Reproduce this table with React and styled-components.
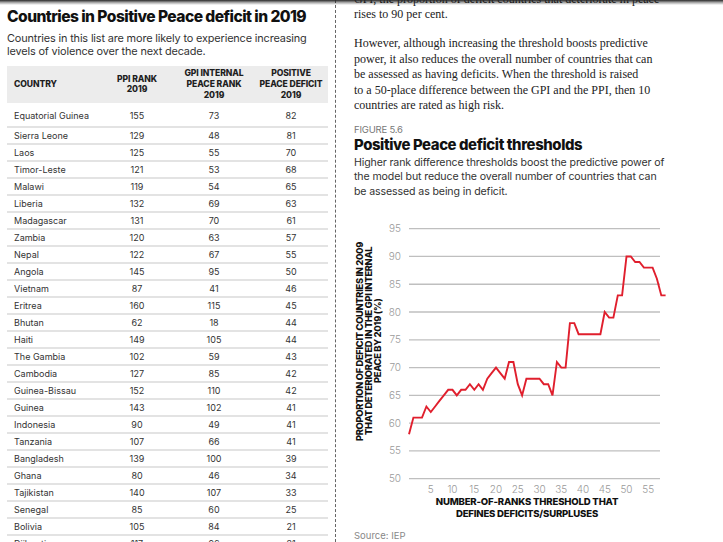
import React from 'react';
import styled, { createGlobalStyle } from 'styled-components';

const GlobalStyle = createGlobalStyle`
  html, body {
    margin: 0;
    padding: 0;
    background: #fff;
  }
  body {
    font-family: Inter, "Liberation Sans", sans-serif;
    color: #222;
    overflow: hidden;
  }
`;

const rows = [
  ['Equatorial Guinea', 155, 73, 82],
  ['Sierra Leone', 129, 48, 81],
  ['Laos', 125, 55, 70],
  ['Timor-Leste', 121, 53, 68],
  ['Malawi', 119, 54, 65],
  ['Liberia', 132, 69, 63],
  ['Madagascar', 131, 70, 61],
  ['Zambia', 120, 63, 57],
  ['Nepal', 122, 67, 55],
  ['Angola', 145, 95, 50],
  ['Vietnam', 87, 41, 46],
  ['Eritrea', 160, 115, 45],
  ['Bhutan', 62, 18, 44],
  ['Haiti', 149, 105, 44],
  ['The Gambia', 102, 59, 43],
  ['Cambodia', 127, 85, 42],
  ['Guinea-Bissau', 152, 110, 42],
  ['Guinea', 143, 102, 41],
  ['Indonesia', 90, 49, 41],
  ['Tanzania', 107, 66, 41],
  ['Bangladesh', 139, 100, 39],
  ['Ghana', 80, 46, 34],
  ['Tajikistan', 140, 107, 33],
  ['Senegal', 85, 60, 25],
  ['Bolivia', 105, 84, 21],
  ['Djibouti', 117, 96, 21],
];

// threshold -> % of deficit countries that deteriorated
const series = [
  58, 61, 61, 61, 63, 62, 63, 64, 65, 66, 66, 65, 66, 66, 67, 66, 67, 66, 68, 69,
  70, 69, 68, 71, 71, 67, 65, 68, 68, 68, 68, 67, 67, 65, 71, 70, 70, 78, 78, 76,
  76, 76, 76, 76, 76, 80, 79, 79, 83, 83, 90, 90, 89, 89, 88, 88, 88, 86, 83, 83,
];

const TopShade = styled.div`
  position: fixed;
  top: 0;
  left: 0;
  right: 0;
  height: 5px;
  background: linear-gradient(#2a2a2a, rgba(0, 0, 0, 0.35) 50%, rgba(0, 0, 0, 0));
  z-index: 5;
`;

const Page = styled.div`
  display: grid;
  grid-template-columns: 336px 1fr;
  height: 542px;
  overflow: hidden;
`;

const LeftColumn = styled.section`
  border-right: 1px dashed #666;
  padding: 0 8px 0 7px;
  overflow: hidden;
`;

const Kicker = styled.div`
  margin-top: -8px;
  font-size: 9px;
  line-height: 10px;
  color: #888;
  letter-spacing: 0.5px;
`;

const TableTitle = styled.h2`
  margin: 5px 0 0;
  font-size: 15.6px;
  line-height: 20px;
  font-weight: 800;
  letter-spacing: -0.55px;
  color: #111;
`;

const TableIntro = styled.p`
  margin: 5px 0 0;
  font-size: 10.9px;
  line-height: 13.4px;
  color: #333;
  letter-spacing: -0.15px;
`;

const Table = styled.div`
  margin-top: 7px;
  width: 321px;
`;

const HeadRow = styled.div`
  display: grid;
  grid-template-columns: 93px 74px 80px 74px;
  align-items: center;
  height: 37px;
  background: #ececec;
`;

const HeadCell = styled.div`
  font-size: 8.6px;
  line-height: 10.6px;
  font-weight: 800;
  color: #1e1e1e;
  text-align: ${({ $left }) => ($left ? 'left' : 'center')};
  padding-left: ${({ $left }) => ($left ? '7px' : '0')};
  letter-spacing: -0.1px;
`;

const Row = styled.div`
  display: grid;
  grid-template-columns: 93px 74px 80px 74px;
  align-items: center;
  box-sizing: border-box;
  height: ${({ $tall }) => ($tall ? '25.5px' : '17px')};
  padding-top: ${({ $tall }) => ($tall ? '1px' : '0')};
  border-bottom: 2px solid #e3e3e3;
`;

const Cell = styled.div`
  font-size: 9px;
  color: #333;
  text-align: ${({ $left }) => ($left ? 'left' : 'center')};
  padding-left: ${({ $left }) => ($left ? '7px' : '0')};
  white-space: nowrap;
`;

const RightColumn = styled.section`
  padding: 0 20px 0 18px;
  overflow: hidden;
`;

const Body = styled.p`
  margin: ${({ $first }) => ($first ? '-8.5px 0 0' : '13.5px 0 0')};
  font-family: "Liberation Serif", "DejaVu Serif", serif;
  font-size: 12px;
  line-height: 15.5px;
  color: #222;
`;

const FigureLabel = styled.div`
  margin-top: 10px;
  font-size: 9.5px;
  line-height: 12px;
  color: #777;
  letter-spacing: -0.2px;
`;

const FigureTitle = styled.h3`
  margin: 0;
  font-size: 14.9px;
  line-height: 18px;
  font-weight: 800;
  letter-spacing: -0.4px;
  color: #111;
`;

const FigureText = styled.p`
  margin: 2px 0 0;
  font-size: 10.6px;
  line-height: 14.5px;
  color: #333;
  letter-spacing: -0.12px;
`;

const ChartRow = styled.div`
  display: flex;
  margin-top: 24px;
`;

const YTitleBox = styled.div`
  width: 30px;
  display: flex;
  justify-content: center;
  padding-top: 18px;
  box-sizing: border-box;
`;

const YTitle = styled.div`
  writing-mode: vertical-rl;
  transform: rotate(180deg);
  font-size: 9.3px;
  line-height: 8.8px;
  font-weight: 800;
  letter-spacing: -0.3px;
  text-align: center;
  color: #111;
  height: 200px;
  white-space: nowrap;
`;

const XTitle = styled.div`
  margin: 0 0 0 30px;
  width: 286px;
  font-size: 9.6px;
  line-height: 11.7px;
  font-weight: 800;
  letter-spacing: -0.2px;
  text-align: center;
  color: #111;
`;

const Source = styled.div`
  margin-top: 11px;
  font-size: 9.5px;
  line-height: 12px;
  color: #888;
`;

const W = 286;
const H = 273;
const gx = (t) => 25 + t * 4.35;
const gy = (v) => 255.7 - (v - 50) * 5.556;

const ThresholdChart = () => {
  const points = series.map((v, t) => `${gx(t).toFixed(1)},${gy(v).toFixed(1)}`).join(' ');
  const yTicks = [50, 55, 60, 65, 70, 75, 80, 85, 90, 95];
  const xTicks = [5, 10, 15, 20, 25, 30, 35, 40, 45, 50, 55];
  return (
    <svg width={W} height={H} viewBox={`0 0 ${W} ${H}`}>
      {yTicks.map((v) => (
        <g key={v}>
          <line x1={25} x2={276} y1={gy(v)} y2={gy(v)} stroke="#bfbfbf" strokeWidth="1.3" />
          <text
            x={17}
            y={gy(v) + 3.5}
            textAnchor="end"
            fontSize="10"
            fontWeight="300"
            fill="#9a9a9a"
            fontFamily="Inter, sans-serif"
          >
            {v}
          </text>
        </g>
      ))}
      {xTicks.map((t) => (
        <text
          key={t}
          x={gx(t)}
          y={270}
          textAnchor="middle"
          fontSize="10"
          fontWeight="300"
          fill="#9a9a9a"
          fontFamily="Inter, sans-serif"
        >
          {t}
        </text>
      ))}
      <polyline points={points} fill="none" stroke="#e01f2d" strokeWidth="1.9" strokeLinejoin="miter" />
    </svg>
  );
};

const App = () => {
  return (
    <>
      <GlobalStyle />
      <TopShade />
      <Page>
        <LeftColumn>
          <Kicker>TABLE 5.2</Kicker>
          <TableTitle>Countries in Positive Peace deficit in 2019</TableTitle>
          <TableIntro>
            Countries in this list are more likely to experience increasing
            <br />
            levels of violence over the next decade.
          </TableIntro>
          <Table>
            <HeadRow>
              <HeadCell $left>COUNTRY</HeadCell>
              <HeadCell>
                PPI RANK
                <br />
                2019
              </HeadCell>
              <HeadCell>
                GPI INTERNAL
                <br />
                PEACE RANK
                <br />
                2019
              </HeadCell>
              <HeadCell>
                POSITIVE
                <br />
                PEACE DEFICIT
                <br />
                2019
              </HeadCell>
            </HeadRow>
            {rows.map(([name, ppi, gpi, deficit], i) => (
              <Row key={name} $tall={i === 0}>
                <Cell $left>{name}</Cell>
                <Cell>{ppi}</Cell>
                <Cell>{gpi}</Cell>
                <Cell>{deficit}</Cell>
              </Row>
            ))}
          </Table>
        </LeftColumn>

        <RightColumn>
          <Body $first>
            GPI, the proportion of deficit countries that deteriorate in peace
            <br />
            rises to 90 per cent.
          </Body>
          <Body>
            However, although increasing the threshold boosts predictive
            <br />
            power, it also reduces the overall number of countries that can
            <br />
            be assessed as having deficits. When the threshold is raised
            <br />
            to a 50-place difference between the GPI and the PPI, then 10
            <br />
            countries are rated as high risk.
          </Body>
          <FigureLabel>FIGURE 5.6</FigureLabel>
          <FigureTitle>Positive Peace deficit thresholds</FigureTitle>
          <FigureText>
            Higher rank difference thresholds boost the predictive power of
            <br />
            the model but reduce the overall number of countries that can
            <br />
            be assessed as being in deficit.
          </FigureText>
          <ChartRow>
            <YTitleBox>
              <YTitle>
                PROPORTION OF DEFICIT COUNTRIES IN 2009
                <br />
                THAT DETERIORATED IN THE GPI INTERNAL
                <br />
                PEACE BY 2019 (%)
              </YTitle>
            </YTitleBox>
            <ThresholdChart />
          </ChartRow>
          <XTitle>
            NUMBER-OF-RANKS THRESHOLD THAT
            <br />
            DEFINES DEFICITS/SURPLUSES
          </XTitle>
          <Source>Source: IEP</Source>
        </RightColumn>
      </Page>
    </>
  );
};

export default App;
